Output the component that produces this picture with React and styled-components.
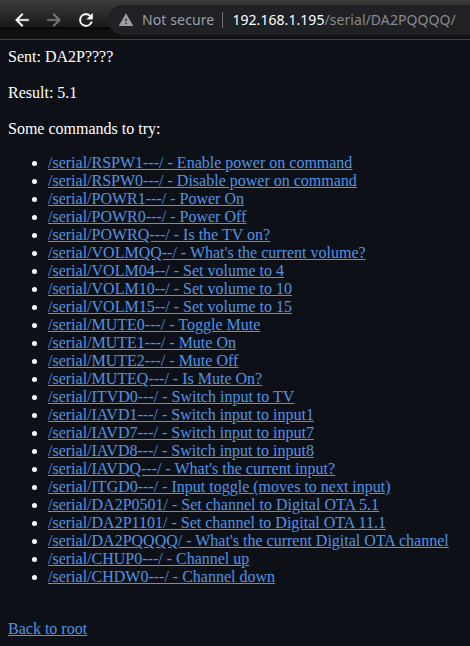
import React from "react";
import styled, { createGlobalStyle } from "styled-components";

const Global = createGlobalStyle`
  html, body { margin: 0; background: #0d1017; overflow: hidden; }
`;
const Window = styled.div`
  width: 470px;
  height: 646px;
  overflow: hidden;
  display: flex;
  flex-direction: column;
  background: #0d1017;
`;
const Toolbar = styled.header`
  box-sizing: border-box;
  height: 40px;
  flex: none;
  display: flex;
  align-items: center;
  background: linear-gradient(#3c3c3c 0, #191919 27px, #030303 28px, #030303 29px, #101010 29px, #101010 39px);
  border-bottom: 1px solid #414141;
`;
const NavButton = styled.button`
  width: 20px;
  height: 20px;
  margin: 0 0 0 12px;
  padding: 0;
  border: 0;
  background: none;
  color: ${(p) => (p.$muted ? "#7c7c7c" : "#fff")};
  svg { display: block; }
`;
const AddressBar = styled.div`
  box-sizing: border-box;
  flex: 1;
  height: 30px;
  margin: 1px 0 0 12px;
  padding: 0 0 1px 10px;
  display: flex;
  align-items: center;
  border-radius: 15px 0 0 15px;
  background: #202124;
  font: 14px/20px "Noto Sans", sans-serif;
  color: #8a8b8d;
  white-space: nowrap;
  svg { flex: none; color: #9aa0a6; }
`;
const Security = styled.span`
  margin-left: 8px;
  letter-spacing: 0.12px;
  color: #9aa0a6;
`;
const Divider = styled.span`
  width: 1px;
  height: 16px;
  margin: 0 9px 0 8px;
  background: #6b6e72;
`;
const Host = styled.span`
  letter-spacing: 0.06px;
  color: #fff;
`;
const Path = styled.span`
  letter-spacing: 0.06px;
`;
const Page = styled.main`
  padding: 8px;
  color: #fff;
  font: 16px/18px "Liberation Serif", serif;
`;
const Line = styled.p`
  margin: 0 0 18px;
`;
const Commands = styled.ul`
  margin: -2px 0 34px;
  padding-left: 40px;
`;
const Command = styled.li`
  white-space: nowrap;
`;
const Link = styled.a`
  color: #5294e2;
  text-decoration: underline;
`;

const icons = {
  back: "M20 11H7.83l5.59-5.59L12 4l-8 8 8 8 1.41-1.41L7.83 13H20v-2z",
  forward: "M12 4l-1.41 1.41L16.17 11H4v2h12.17l-5.58 5.59L12 20l8-8z",
  reload: "M17.65 6.35A7.958 7.958 0 0 0 12 4a8 8 0 1 0 7.73 10h-2.08A6 6 0 1 1 12 6c1.66 0 3.14.69 4.22 1.78L13 11h7V4l-2.35 2.35z",
  warning: "M1 21h22L12 2 1 21zm12-3h-2v-2h2v2zm0-4h-2v-4h2v4z",
};
const Icon = ({ name, size = 20 }) => (
  <svg width={size} height={size} viewBox="0 0 24 24" fill="currentColor" stroke="currentColor" strokeWidth={name === "warning" ? 0 : 0.4}><path d={icons[name]} /></svg>
);

const commands = [
  ["RSPW1---", "Enable power on command"],
  ["RSPW0---", "Disable power on command"],
  ["POWR1---", "Power On"],
  ["POWR0---", "Power Off"],
  ["POWRQ---", "Is the TV on?"],
  ["VOLMQQ--", "What's the current volume?"],
  ["VOLM04--", "Set volume to 4"],
  ["VOLM10--", "Set volume to 10"],
  ["VOLM15--", "Set volume to 15"],
  ["MUTE0---", "Toggle Mute"],
  ["MUTE1---", "Mute On"],
  ["MUTE2---", "Mute Off"],
  ["MUTEQ---", "Is Mute On?"],
  ["ITVD0---", "Switch input to TV"],
  ["IAVD1---", "Switch input to input1"],
  ["IAVD7---", "Switch input to input7"],
  ["IAVD8---", "Switch input to input8"],
  ["IAVDQ---", "What's the current input?"],
  ["ITGD0---", "Input toggle (moves to next input)"],
  ["DA2P0501", "Set channel to Digital OTA 5.1"],
  ["DA2P1101", "Set channel to Digital OTA 11.1"],
  ["DA2PQQQQ", "What's the current Digital OTA channel"],
  ["CHUP0---", "Channel up"],
  ["CHDW0---", "Channel down"],
];

export default function App() {
  return (
    <Window>
      <Global />
      <Toolbar>
        <NavButton aria-label="Back"><Icon name="back" /></NavButton>
        <NavButton aria-label="Forward" $muted><Icon name="forward" /></NavButton>
        <NavButton aria-label="Reload"><Icon name="reload" /></NavButton>
        <AddressBar>
          <Icon name="warning" size={16} />
          <Security>Not secure</Security>
          <Divider />
          <Host>192.168.1.195</Host>
          <Path>/serial/DA2PQQQQ/</Path>
        </AddressBar>
      </Toolbar>
      <Page>
        <Line>Sent: DA2P????</Line>
        <Line>Result: 5.1</Line>
        <Line>Some commands to try:</Line>
        <Commands>
          {commands.map(([code, text]) => (
            <Command key={code}><Link href="#">{`/serial/${code}/ - ${text}`}</Link></Command>
          ))}
        </Commands>
        <Link href="#">Back to root</Link>
      </Page>
    </Window>
  );
}
